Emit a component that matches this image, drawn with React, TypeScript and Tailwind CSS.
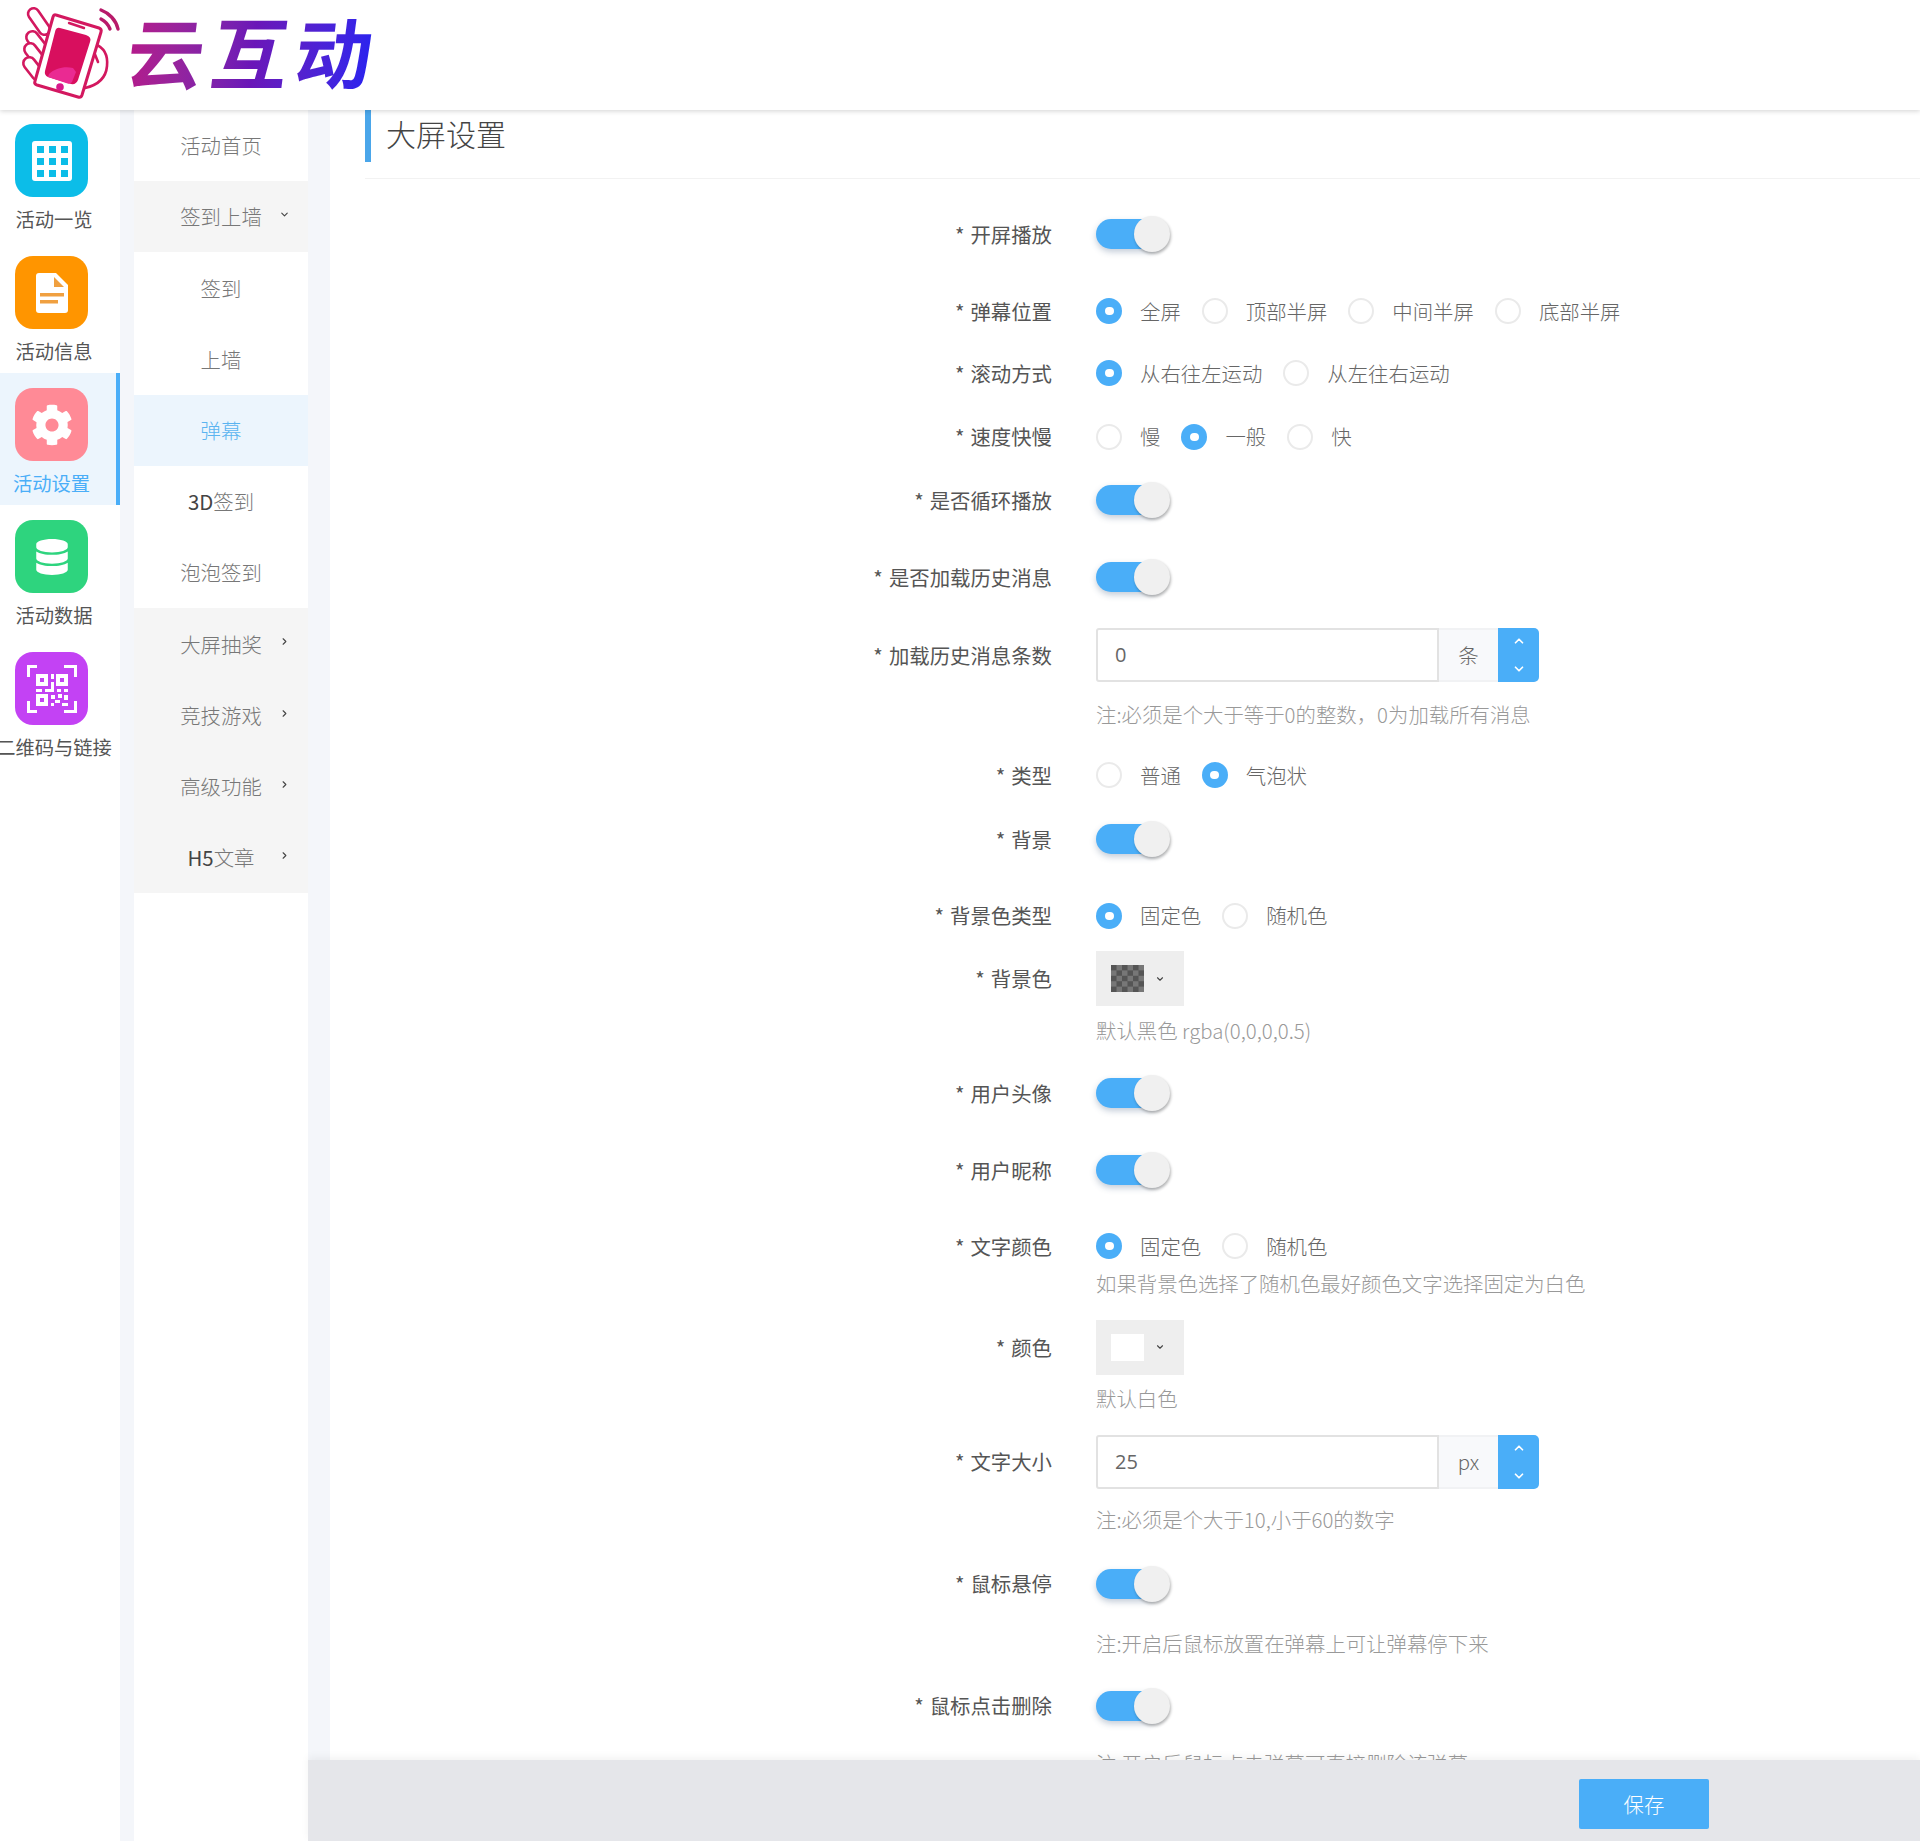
import React from "react";
import { ChevronDown, ChevronRight, ChevronUp } from "lucide-react";
import { FaCog, FaDatabase } from "react-icons/fa";

const cjk = "font-['Noto_Sans_CJK_SC','Noto_Sans',sans-serif]";

function Logo() {
  return (
    <svg width="120" height="110" viewBox="0 0 120 110" className="shrink-0">
      <g fill="none" stroke="#d3185f" strokeWidth="2.6" strokeLinecap="round" strokeLinejoin="round">
        <path d="M91 10 C99 13 106 20 108 29" strokeWidth="3.4" stroke="#b81a6a" />
        <path d="M91 19 C95 21 98 24 100 29" strokeWidth="3.4" stroke="#b81a6a" />
        <rect x="-5" y="-14" width="11" height="30" rx="5.5" transform="translate(28 21) rotate(-35)" fill="#fff" />
        <rect x="-6" y="-12" width="12" height="26" rx="6" transform="translate(26 42) rotate(-38)" fill="#fff" />
        <rect x="-6" y="-12" width="12" height="26" rx="6" transform="translate(24 54) rotate(-38)" fill="#fff" />
        <rect x="-6" y="-12" width="12" height="26" rx="6" transform="translate(23 68) rotate(-38)" fill="#fff" />
        <path d="M85 44 C95 48 98 56 97 66 C96 78 88 85 75 88" />
        <path d="M84 52 L88 62" />
        <path d="M46 15 L89 28 Q92 29 91 32 L72 95 Q71 98 68 97 L27 85 Q24 84 25 81 L43 17 Q44 14 46 15 Z" fill="#fff" strokeWidth="3" />
        <path d="M59 23 L74 28" strokeWidth="2.4" />
      </g>
      <path d="M50 28 L76 35 Q82 37 80 42 L68 80 Q66 85 61 84 L38 77 Q34 75 35 71 L45 32 Q46 27 50 28 Z" fill="#d80f5e" />
      <path d="M39 74 C45 68 55 66 63 68 L66 72 L62 82 Q60 85 56 83 L38 77 Z" fill="#ea2a92" />
      <circle cx="50" cy="87" r="3.8" fill="#d8188c" />
    </svg>
  );
}

function IconGrid() {
  return (
    <svg width="40" height="40" viewBox="0 0 40 40">
      <rect width="40" height="40" rx="3" fill="#fff" />
      <g fill="#0cbde8">
        {[5, 17, 29].map((y) => [5, 17, 29].map((x) => <rect key={`${x}-${y}`} x={x} y={y} width="7" height="7" />))}
      </g>
    </svg>
  );
}

function IconDoc() {
  return (
    <svg width="32" height="40" viewBox="0 0 32 40">
      <path d="M3 0 H20 L32 12 V37 Q32 40 29 40 H3 Q0 40 0 37 V3 Q0 0 3 0 Z" fill="#fff" />
      <path d="M18 4 L28 14 H18 Z" fill="#f0a040" />
      <rect x="4" y="20" width="24" height="3.5" fill="#f0a040" />
      <rect x="4" y="27" width="18" height="3.5" fill="#f0a040" />
    </svg>
  );
}

function IconQr() {
  return (
    <svg width="50" height="48" viewBox="0 0 50 48" fill="#fff">
      <path d="M0 0 H10 V3 H3 V12 H0 Z M50 0 H37 V3 H47 V12 H50 Z M0 48 H10 V45 H3 V36 H0 Z M50 48 H37 V45 H47 V36 H50 Z" />
      <path fillRule="evenodd" d="M9 9 H21 V21 H9 Z M13 13 V17 H17 V13 Z M29 9 H41 V21 H29 Z M33 13 V17 H37 V13 Z M9 29 H21 V41 H9 Z M13 33 V37 H17 V33 Z" />
      <rect x="24" y="9" width="3" height="5" />
      <rect x="24" y="17" width="3" height="7" />
      <rect x="9" y="24" width="6" height="3" />
      <rect x="18" y="24" width="9" height="3" />
      <rect x="30" y="24" width="4" height="3" />
      <rect x="37" y="24" width="4" height="3" />
      <rect x="24" y="30" width="4" height="4" />
      <rect x="31" y="29" width="4" height="4" />
      <rect x="37" y="30" width="4" height="5" />
      <rect x="28" y="35" width="5" height="3" />
      <rect x="24" y="38" width="3" height="3" />
      <rect x="35" y="38" width="6" height="3" />
    </svg>
  );
}

function RailItem({ bg, icon, label, active }: { bg: string; icon: React.ReactNode; label: string; active?: boolean }) {
  return (
    <div className={`h-[132px] w-[120px] pt-[15px] ${active ? "bg-[#ecf5fd] border-r-4 border-[#4aaef8]" : ""}`}>
      <div className={`ml-[15px] flex h-[73px] w-[73px] items-center justify-center rounded-[18px] ${bg}`}>{icon}</div>
      <div className={`mt-[8px] flex justify-center whitespace-nowrap text-[19.3px] leading-[28px] ${active ? "w-[103px] text-[#4aaef8]" : "w-[108px] text-[#555]"}`}>
        {label}
      </div>
    </div>
  );
}

function SubItem({ label, latin, tone, arrow }: { label: string; latin?: string; tone?: "gray" | "active"; arrow?: "down" | "right" }) {
  const bg = tone === "gray" ? "bg-[#f5f5f5]" : tone === "active" ? "bg-[#ecf5fd]" : "bg-white";
  const color = tone === "active" ? "text-[#5bb4f0]" : "text-[#777]";
  return (
    <div className={`relative flex h-[71.2px] items-center justify-center text-[20.4px] font-light ${bg} ${color}`}>
      {latin && <span className="font-normal text-[#444]">{latin}</span>}
      {label}
      {arrow === "down" && <ChevronDown size={11} strokeWidth={2.4} className="absolute right-[18px] top-[28px] text-[#444]" />}
      {arrow === "right" && <ChevronRight size={11} strokeWidth={2.4} className="absolute right-[18px] top-[28px] text-[#444]" />}
    </div>
  );
}

function Row({ label, mt, children }: { label?: string; mt: string; children: React.ReactNode }) {
  return (
    <div className={`flex items-center ${mt}`}>
      <div className="w-[723px] shrink-0 whitespace-nowrap pr-[1px] text-right text-[20.4px] text-[#555]">
        {label && <span className="mr-[6px]">*</span>}
        {label}
      </div>
      <div className="ml-[43px] flex items-center">{children}</div>
    </div>
  );
}

function Toggle() {
  return (
    <div className="relative flex h-[36px] w-[74px] items-center">
      <div className="h-[30px] w-[68px] rounded-full bg-[#4aaef8] shadow-[0_3px_6px_rgba(60,90,130,0.3)]" />
      <div className="absolute right-0 top-0 h-[36px] w-[36px] rounded-full bg-[#f0f0f0] shadow-[1px_2px_3px_rgba(0,0,0,0.28)]" />
    </div>
  );
}

function Radios({ items, on }: { items: string[]; on: number }) {
  return (
    <div className="flex h-[30px] items-center gap-[21px]">
      {items.map((t, i) => (
        <div key={t} className="flex items-center gap-[18px]">
          {i === on ? (
            <div className="flex h-[26px] w-[26px] items-center justify-center rounded-full bg-[#4aaef8]">
              <div className="h-[8px] w-[9px] rounded-full bg-white" />
            </div>
          ) : (
            <div className="h-[26px] w-[26px] rounded-full border-2 border-[#eaeaea] bg-white" />
          )}
          <span className="text-[20.4px] font-light text-[#666]">{t}</span>
        </div>
      ))}
    </div>
  );
}

function Stepper({ value, unit }: { value: string; unit: string }) {
  return (
    <div className="flex h-[54px] w-[443px]">
      <div className="flex w-[343px] items-center rounded-l-[3px] border-2 border-[#e2e2e2] pl-[17px] font-['Open_Sans',sans-serif] text-[20px] text-[#666]">
        {value}
      </div>
      <div className="flex w-[59px] items-center justify-center border-y-2 border-[#f1f2f4] bg-[#f8f9fb] text-[20.4px] font-light text-[#666]">
        {unit}
      </div>
      <div className="flex w-[41px] flex-col items-center justify-between rounded-r-[5px] bg-[#4aaef8] py-[6px] text-white">
        <ChevronUp size={14} strokeWidth={3} />
        <ChevronDown size={14} strokeWidth={3} />
      </div>
    </div>
  );
}

function Swatch({ dark }: { dark?: boolean }) {
  return (
    <div className="flex h-[55px] w-[88px] items-center bg-[#eeeeee] pl-[15px]">
      {dark ? (
        <svg width="33" height="27" viewBox="0 0 33 27" className="shrink-0">
          <rect width="33" height="27" fill="#555" />
          <g fill="#777">
            <rect x="5.5" y="0" width="5.5" height="5.4" />
            <rect x="16.5" y="0" width="5.5" height="5.4" />
            <rect x="27.5" y="0" width="5.5" height="5.4" />
            <rect x="0" y="5.4" width="5.5" height="5.4" />
            <rect x="11" y="5.4" width="5.5" height="5.4" />
            <rect x="22" y="5.4" width="5.5" height="5.4" />
            <rect x="5.5" y="10.8" width="5.5" height="5.4" />
            <rect x="16.5" y="10.8" width="5.5" height="5.4" />
            <rect x="27.5" y="10.8" width="5.5" height="5.4" />
            <rect x="0" y="16.2" width="5.5" height="5.4" />
            <rect x="11" y="16.2" width="5.5" height="5.4" />
            <rect x="22" y="16.2" width="5.5" height="5.4" />
            <rect x="5.5" y="21.6" width="5.5" height="5.4" />
            <rect x="16.5" y="21.6" width="5.5" height="5.4" />
            <rect x="27.5" y="21.6" width="5.5" height="5.4" />
          </g>
        </svg>
      ) : (
        <div className="h-[27px] w-[33px] bg-white" />
      )}
      <ChevronDown size={10} strokeWidth={2.6} className="ml-[11px] text-[#444]" />
    </div>
  );
}

function Note({ mt, children }: { mt: string; children: React.ReactNode }) {
  return (
    <div className={`ml-[766px] h-[28px] whitespace-nowrap text-[20.4px] font-light leading-[28px] text-[#999] ${mt}`}>{children}</div>
  );
}

export default function App() {
  return (
    <div className={`flex h-[1841px] w-[1920px] flex-col overflow-hidden bg-[#f4f6fa] ${cjk}`}>
      <header className="relative z-20 flex h-[110px] shrink-0 items-center bg-white pl-[10px] shadow-[0_1px_5px_rgba(0,0,0,0.18)]">
        <Logo />
        <div className="-ml-[2px] -mt-[10px] inline-block -skew-x-[7deg] bg-gradient-to-r from-[#b5198a] via-[#6a16b8] to-[#2222f2] bg-clip-text text-[77px] font-bold leading-[104px] tracking-[7px] text-transparent">
          云互动
        </div>
      </header>
      <div className="flex min-h-0 flex-1">
        <nav className="-mt-[1px] w-[120px] shrink-0 bg-white">
          <RailItem bg="bg-[#0cbde8]" icon={<IconGrid />} label="活动一览" />
          <RailItem bg="bg-[#ff9500]" icon={<IconDoc />} label="活动信息" />
          <RailItem bg="bg-[#ff8a96]" icon={<FaCog size={42} color="#fff" />} label="活动设置" active />
          <RailItem bg="bg-[#2ed47e]" icon={<FaDatabase size={36} color="#fff" />} label="活动数据" />
          <RailItem bg="bg-[#c342f4]" icon={<IconQr />} label="二维码与链接" />
        </nav>
        <aside className="ml-[14px] w-[174px] shrink-0 bg-white">
          <SubItem label="活动首页" />
          <SubItem label="签到上墙" tone="gray" arrow="down" />
          <SubItem label="签到" />
          <SubItem label="上墙" />
          <SubItem label="弹幕" tone="active" />
          <SubItem latin="3D" label="签到" />
          <SubItem label="泡泡签到" />
          <SubItem label="大屏抽奖" tone="gray" arrow="right" />
          <SubItem label="竞技游戏" tone="gray" arrow="right" />
          <SubItem label="高级功能" tone="gray" arrow="right" />
          <SubItem latin="H5" label="文章" tone="gray" arrow="right" />
        </aside>
        <div className="flex min-w-0 flex-1 flex-col">
          <div className="relative ml-[22px] min-h-0 flex-1 overflow-hidden bg-white">
            <div className="ml-[35px] border-b border-[#f2f2f2] pb-[16px]">
              <div className="h-[52px] border-l-[6px] border-[#4aa6ea] pl-[15px] text-[30px] font-light leading-[46px] text-[#444]">大屏设置</div>
            </div>
            <Row label="开屏播放" mt="mt-[37px]"><Toggle /></Row>
            <Row label="弹幕位置" mt="mt-[44px]"><Radios items={["全屏", "顶部半屏", "中间半屏", "底部半屏"]} on={0} /></Row>
            <Row label="滚动方式" mt="mt-[31px]"><Radios items={["从右往左运动", "从左往右运动"]} on={0} /></Row>
            <Row label="速度快慢" mt="mt-[33px]"><Radios items={["慢", "一般", "快"]} on={1} /></Row>
            <Row label="是否循环播放" mt="mt-[30px]"><Toggle /></Row>
            <Row label="是否加载历史消息" mt="mt-[41px]"><Toggle /></Row>
            <Row label="加载历史消息条数" mt="mt-[33px]"><Stepper value="0" unit="条" /></Row>
            <Note mt="mt-[18px]">注:必须是个大于等于0的整数，0为加载所有消息</Note>
            <Row label="类型" mt="mt-[32px]"><Radios items={["普通", "气泡状"]} on={1} /></Row>
            <Row label="背景" mt="mt-[31px]"><Toggle /></Row>
            <Row label="背景色类型" mt="mt-[43px]"><Radios items={["固定色", "随机色"]} on={0} /></Row>
            <Row label="背景色" mt="mt-[20px]"><Swatch dark /></Row>
            <Note mt="mt-[10px]">默认黑色 rgba(0,0,0,0.5)</Note>
            <Row label="用户头像" mt="mt-[31px]"><Toggle /></Row>
            <Row label="用户昵称" mt="mt-[41px]"><Toggle /></Row>
            <Row label="文字颜色" mt="mt-[43px]"><Radios items={["固定色", "随机色"]} on={0} /></Row>
            <Note mt="mt-[7px]">如果背景色选择了随机色最好颜色文字选择固定为白色</Note>
            <Row label="颜色" mt="mt-[23px]"><Swatch /></Row>
            <Note mt="mt-[9px]">默认白色</Note>
            <Row label="文字大小" mt="mt-[23px]"><Stepper value="25" unit="px" /></Row>
            <Note mt="mt-[16px]">注:必须是个大于10,小于60的数字</Note>
            <Row label="鼠标悬停" mt="mt-[33px]"><Toggle /></Row>
            <Note mt="mt-[27px]">注:开启后鼠标放置在弹幕上可让弹幕停下来</Note>
            <Row label="鼠标点击删除" mt="mt-[31px]"><Toggle /></Row>
            <Note mt="mt-[25px]">注:开启后鼠标点击弹幕可直接删除该弹幕</Note>
          </div>
          <footer className="relative z-10 flex h-[81px] shrink-0 items-start justify-end bg-[#e5e6ea] pr-[211px] pt-[19px] shadow-[0_-3px_8px_rgba(0,0,0,0.05)]">
            <button className="h-[50px] w-[130px] rounded-[2px] bg-[#4aaef8] text-[20.4px] font-light text-white">保存</button>
          </footer>
        </div>
      </div>
    </div>
  );
}
